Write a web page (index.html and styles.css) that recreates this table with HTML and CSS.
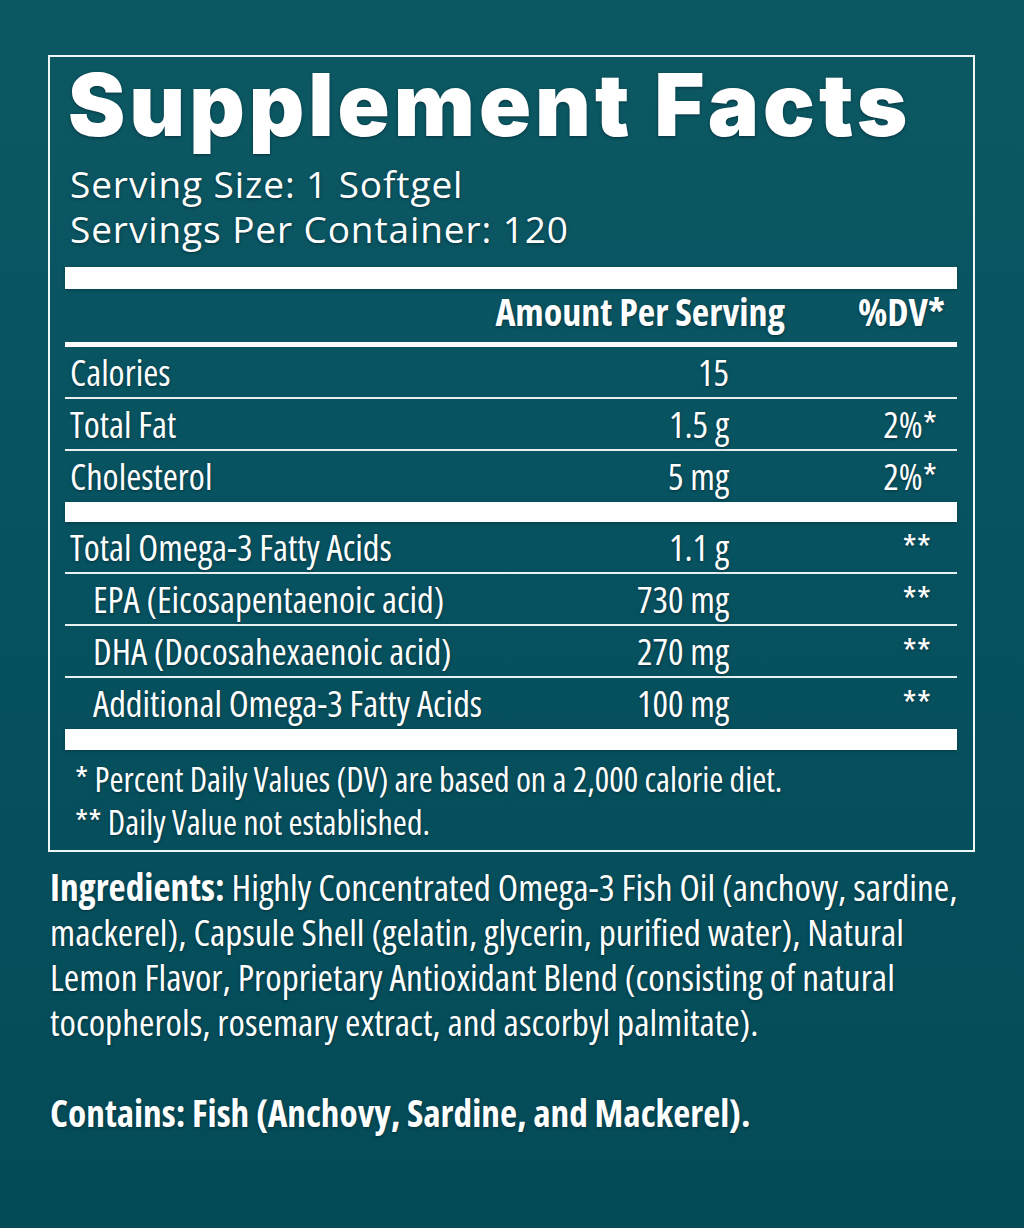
FILE: index.html
```html
<!DOCTYPE html>
<html lang="en">
<head>
<meta charset="utf-8">
<title>Supplement Facts</title>
<link rel="stylesheet" href="styles.css">
</head>
<body>
<main class="page">
  <section class="panel">
    <h1 class="title">Supplement Facts</h1>
    <div class="servings">
      <p>Serving Size: 1 Softgel</p>
      <p>Servings Per Container: 120</p>
    </div>

    <div class="facts">
      <div class="bar"></div>
      <div class="head">
        <span class="head-amount">Amount Per Serving</span>
        <span class="head-dv">%DV*</span>
      </div>
      <div class="row">
        <span class="label">Calories</span>
        <span class="amount">15</span>
        <span class="dv"></span>
      </div>
      <div class="row">
        <span class="label">Total Fat</span>
        <span class="amount">1.5 g</span>
        <span class="dv pct">2%*</span>
      </div>
      <div class="row last">
        <span class="label">Cholesterol</span>
        <span class="amount">5 mg</span>
        <span class="dv pct">2%*</span>
      </div>
      <div class="bar bar-mid"></div>
      <div class="row">
        <span class="label">Total Omega-3 Fatty Acids</span>
        <span class="amount">1.1 g</span>
        <span class="dv star">**</span>
      </div>
      <div class="row">
        <span class="label sub">EPA (Eicosapentaenoic acid)</span>
        <span class="amount">730 mg</span>
        <span class="dv star">**</span>
      </div>
      <div class="row">
        <span class="label sub">DHA (Docosahexaenoic acid)</span>
        <span class="amount">270 mg</span>
        <span class="dv star">**</span>
      </div>
      <div class="row last">
        <span class="label sub">Additional Omega-3 Fatty Acids</span>
        <span class="amount">100 mg</span>
        <span class="dv star">**</span>
      </div>
      <div class="bar bar-end"></div>
    </div>

    <div class="notes">
      <p>* Percent Daily Values (DV) are based on a 2,000 calorie diet.</p>
      <p>** Daily Value not established.</p>
    </div>
  </section>

  <section class="ingredients">
    <p><strong>Ingredients:</strong> Highly Concentrated Omega-3 Fish Oil (anchovy, sardine, mackerel), Capsule Shell (gelatin, glycerin, purified water), Natural Lemon Flavor, Proprietary Antioxidant Blend (consisting of natural tocopherols, rosemary extract, and ascorbyl palmitate).</p>
    <p class="contains"><strong>Contains: Fish (Anchovy, Sardine, and Mackerel).</strong></p>
  </section>
</main>
</body>
</html>
```

FILE: styles.css
```css
* { box-sizing: border-box; }

html, body {
  margin: 0;
  padding: 0;
}

body {
  width: 1024px;
  height: 1228px;
  overflow: hidden;
  background: linear-gradient(180deg, #0c5862 0%, #075260 45%, #034b57 100%);
  color: #ffffff;
  font-family: "Open Sans", "Noto Sans", sans-serif;
  font-stretch: 75%;
  text-shadow: 0 1px 3px rgba(0, 28, 38, 0.6);
}

.page {
  padding: 55px 0 0 48px;
}

.panel {
  width: 927px;
  border: 2px solid #eef6f6;
  padding: 6px 16px 6px 15px;
}

.title {
  margin: 0;
  font-family: "Inter", "Open Sans", sans-serif;
  font-stretch: 100%;
  font-weight: 900;
  font-size: 86px;
  line-height: 84px;
  letter-spacing: 4px;
  padding-left: 3px;
  white-space: nowrap;
}

.servings {
  margin: 14px 0 16px;
  padding-left: 5px;
  font-family: "Open Sans", sans-serif;
  font-stretch: 100%;
  font-size: 37px;
  line-height: 45px;
  letter-spacing: 0.9px;
}

.servings p {
  margin: 0;
}

.facts {
  width: 892px;
}

.bar {
  height: 22px;
  background: #ffffff;
  box-shadow: 0 1px 3px rgba(0, 28, 38, 0.4);
}

.bar-mid {
  height: 20px;
}

.bar-end {
  height: 21px;
}

.head {
  display: flex;
  justify-content: flex-end;
  height: 58px;
  padding-right: 12px;
  border-bottom: 5px solid #ffffff;
  font-weight: 700;
  font-size: 38px;
  line-height: 45px;
  white-space: nowrap;
}

.head-amount {
  text-align: right;
}

.head-dv {
  width: 160px;
  text-align: right;
}

.row {
  display: grid;
  grid-template-columns: 1fr 200px 216px;
  height: 52px;
  padding-right: 12px;
  border-bottom: 2px solid #e8f1f1;
  font-size: 36.5px;
  line-height: 50px;
}

.row.last {
  border-bottom: 0;
  height: 51px;
}

.label {
  padding-left: 5px;
  white-space: nowrap;
}

.label.sub {
  padding-left: 28px;
}

.amount {
  text-align: right;
  white-space: nowrap;
}

.dv {
  text-align: right;
}

.dv.pct {
  padding-right: 8px;
}

.dv.star {
  padding-right: 14px;
}

.notes {
  padding: 8px 0 0 10px;
  font-size: 34px;
  line-height: 43px;
}

.notes p {
  margin: 0;
}

.ingredients {
  width: 930px;
  padding: 12px 0 0 2px;
  font-size: 37.3px;
  line-height: 45px;
}

.ingredients p {
  margin: 0;
}

.ingredients strong {
  font-weight: 700;
}

.ingredients .contains {
  margin-top: 46px;
}
```
